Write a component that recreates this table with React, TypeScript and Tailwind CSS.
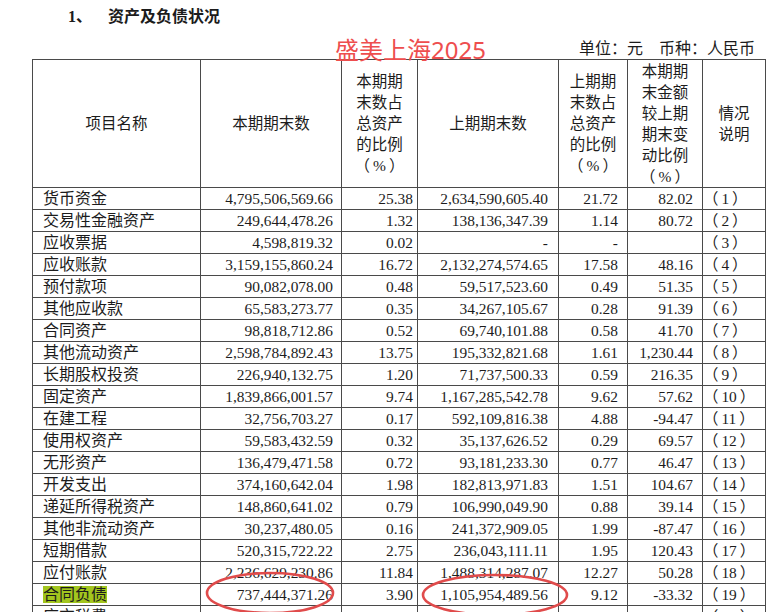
import React from "react";

type Row = [string, string, string, string, string, string, string];

const rows: Row[] = [
  ["货币资金", "4,795,506,569.66", "25.38", "2,634,590,605.40", "21.72", "82.02", "（1）"],
  ["交易性金融资产", "249,644,478.26", "1.32", "138,136,347.39", "1.14", "80.72", "（2）"],
  ["应收票据", "4,598,819.32", "0.02", "-", "-", "", "（3）"],
  ["应收账款", "3,159,155,860.24", "16.72", "2,132,274,574.65", "17.58", "48.16", "（4）"],
  ["预付款项", "90,082,078.00", "0.48", "59,517,523.60", "0.49", "51.35", "（5）"],
  ["其他应收款", "65,583,273.77", "0.35", "34,267,105.67", "0.28", "91.39", "（6）"],
  ["合同资产", "98,818,712.86", "0.52", "69,740,101.88", "0.58", "41.70", "（7）"],
  ["其他流动资产", "2,598,784,892.43", "13.75", "195,332,821.68", "1.61", "1,230.44", "（8）"],
  ["长期股权投资", "226,940,132.75", "1.20", "71,737,500.33", "0.59", "216.35", "（9）"],
  ["固定资产", "1,839,866,001.57", "9.74", "1,167,285,542.78", "9.62", "57.62", "（10）"],
  ["在建工程", "32,756,703.27", "0.17", "592,109,816.38", "4.88", "-94.47", "（11）"],
  ["使用权资产", "59,583,432.59", "0.32", "35,137,626.52", "0.29", "69.57", "（12）"],
  ["无形资产", "136,479,471.58", "0.72", "93,181,233.30", "0.77", "46.47", "（13）"],
  ["开发支出", "374,160,642.04", "1.98", "182,813,971.83", "1.51", "104.67", "（14）"],
  ["递延所得税资产", "148,860,641.02", "0.79", "106,990,049.90", "0.88", "39.14", "（15）"],
  ["其他非流动资产", "30,237,480.05", "0.16", "241,372,909.05", "1.99", "-87.47", "（16）"],
  ["短期借款", "520,315,722.22", "2.75", "236,043,111.11", "1.95", "120.43", "（17）"],
  ["应付账款", "2,236,629,230.86", "11.84", "1,488,314,287.07", "12.27", "50.28", "（18）"],
  ["合同负债", "737,444,371.26", "3.90", "1,105,954,489.56", "9.12", "-33.32", "（19）"],
  ["应交税费", "", "", "", "", "", "（20）"],
];

const cjk = { fontFamily: "'Noto Sans CJK SC', 'Liberation Serif', sans-serif" };
const cell = "border border-[#4a4a4a] p-0 h-[22px] leading-[21px] whitespace-nowrap";
const head = "border border-[#4a4a4a] p-0 text-center align-middle leading-[21px] text-[15.5px] font-normal";

// full-width parens taken from the CJK face, kept from growing the line box
const L = () => <span className="leading-none" style={cjk}>（</span>;
const R = () => <span className="leading-none" style={cjk}>）</span>;
const Pct = () => (
  <>
    <L />
    <span className="mx-[3px]">%</span>
    <R />
  </>
);

export default function App() {
  return (
    <div
      className="relative w-[783px] h-[612px] overflow-hidden bg-white text-[#1c1c1c]"
      style={{ fontFamily: "'Liberation Serif', 'Noto Sans CJK SC', serif" }}
    >
      <div className="h-[36px] pl-[68px] pb-[2px] flex items-center text-[16px] font-bold">
        <span>1、</span>
        <span className="ml-[16px]">资产及负债状况</span>
      </div>
      <div className="h-[23px] leading-[23px] flex justify-end pr-[28px] text-[16px]" style={cjk}>
        <span>单位：元</span>
        <span className="ml-[16px]">币种：人民币</span>
      </div>

      <table className="ml-[32px] table-fixed border-collapse w-[733px]">
        <colgroup>
          <col className="w-[168px]" />
          <col className="w-[141px]" />
          <col className="w-[76px]" />
          <col className="w-[141px]" />
          <col className="w-[69px]" />
          <col className="w-[75px]" />
          <col className="w-[63px]" />
        </colgroup>
        <thead>
          <tr className="h-[128px]">
            <th className={head}>项目名称</th>
            <th className={head}>本期期末数</th>
            <th className={head}>
              本期期<br />末数占<br />总资产<br />的比例<br /><Pct />
            </th>
            <th className={head}>上期期末数</th>
            <th className={head}>
              上期期<br />末数占<br />总资产<br />的比例<br /><Pct />
            </th>
            <th className={head}>
              本期期<br />末金额<br />较上期<br />期末变<br />动比例<br /><Pct />
            </th>
            <th className={head}>
              情况<br />说明
            </th>
          </tr>
        </thead>
        <tbody>
          {rows.map((r, i) => (
            <tr key={i}>
              <td className={`${cell} pl-[10px] text-[16px]`}>
                {r[0] === "合同负债" ? <span className="bg-[#a3c61e]">{r[0]}</span> : r[0]}
              </td>
              <td className={`${cell} pr-[8px] text-right text-[15.4px]`}>{r[1]}</td>
              <td className={`${cell} pr-[4px] text-right text-[15.4px]`}>{r[2]}</td>
              <td className={`${cell} pr-[10px] text-right text-[15.4px]`}>{r[3]}</td>
              <td className={`${cell} pr-[9px] text-right text-[15.4px]`}>{r[4]}</td>
              <td className={`${cell} pr-[9px] text-right text-[15.4px]`}>{r[5]}</td>
              <td className={`${cell} pl-0 text-[15.4px]`}>
                <L />
                <span className="mx-[3px]">{r[6].slice(1, -1)}</span>
                <R />
              </td>
            </tr>
          ))}
        </tbody>
      </table>

      <div
        className="absolute left-[335px] top-[35px] text-[24px] leading-[30px] text-[#ee4e4e]"
        style={{ fontFamily: "'Noto Sans', 'Noto Sans CJK SC', sans-serif" }}
      >
        盛美上海2025
      </div>

      <svg className="absolute inset-0 pointer-events-none" width="783" height="612">
        <ellipse cx="270" cy="593" rx="63" ry="20" fill="none" stroke="#e04b4b" strokeWidth="2.6" />
        <ellipse cx="495" cy="595" rx="72" ry="20" fill="none" stroke="#e04b4b" strokeWidth="2.6" />
      </svg>
    </div>
  );
}
